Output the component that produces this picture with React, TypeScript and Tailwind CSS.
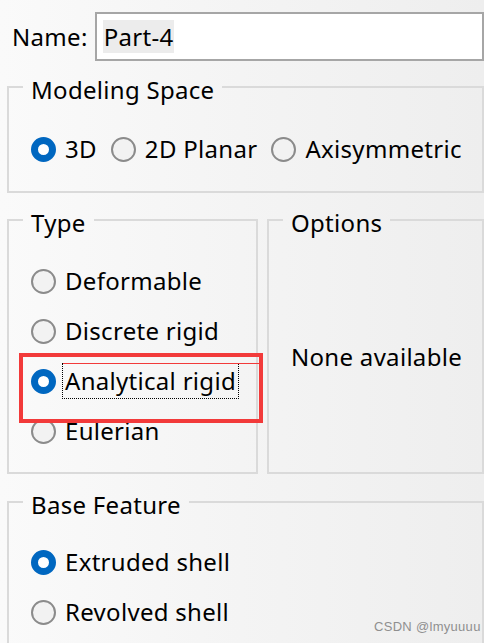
import React from "react"

const font = { fontFamily: "'Noto Sans', 'Open Sans', sans-serif" }

function Radio({ checked, label, focused }: { checked?: boolean; label: string; focused?: boolean }) {
  return (
    <label className="flex items-center h-[36px]">
      {checked ? (
        <span className="w-[25px] h-[25px] rounded-full border-[7px] border-[#0067c0] bg-white shrink-0" />
      ) : (
        <span className="w-[25px] h-[25px] rounded-full border-2 border-[#8b8b8b] bg-[#f2f2f2] shrink-0" />
      )}
      <span
        className={
          "ml-[6px] px-[3px] leading-[36px] whitespace-nowrap " +
          (focused ? "outline-1 outline-dotted outline-black -outline-offset-1" : "")
        }
      >
        {label}
      </span>
    </label>
  )
}

// legend is 36px tall (text pushed down 6px) so the border sits ~3px above the text middle
function Group({ title, className, children }: { title: string; className?: string; children: React.ReactNode }) {
  return (
    <fieldset className={"border-2 border-[#dadada] pl-[14px] pr-2 m-0 min-w-0 " + (className ?? "")}>
      <legend className="px-[8px] pt-[6px] leading-[30px]">{title}</legend>
      {children}
    </fieldset>
  )
}

export default function App() {
  return (
    <div
      className="relative w-[484px] h-[643px] overflow-hidden bg-gradient-to-r from-[#fafafa] to-[#eeeeee] text-black text-[24px] tracking-[0.3px]"
      style={font}
    >
      <div className="flex items-center pt-[12px] pl-[12px]">
        <span className="leading-[30px]">Name:</span>
        <div className="ml-[7px] flex-1 h-[49px] border-2 border-[#a6a6a6] bg-white flex items-center pl-[6px]">
          <span className="bg-[#ececec] px-[1px] leading-[33px]">Part-4</span>
        </div>
      </div>

      <div className="pl-[7px]">
        <Group title="Modeling Space" className="mt-[8px] h-[124px]">
          <div className="flex items-center gap-[11px] pl-[8px] pt-[26px]">
            <Radio checked label="3D" />
            <Radio label="2D Planar" />
            <Radio label="Axisymmetric" />
          </div>
        </Group>

        <div className="flex gap-[9px] mt-[9px]">
          <Group title="Type" className="w-[251px] h-[272px]">
            <div className="flex flex-col gap-[14px] pl-[8px] pt-[25px]">
              <Radio label="Deformable" />
              <Radio label="Discrete rigid" />
              <Radio checked focused label="Analytical rigid" />
              <Radio label="Eulerian" />
            </div>
          </Group>
          <Group title="Options" className="flex-1 h-[272px]">
            <div className="pt-[104px] pl-[8px] leading-[30px]">None available</div>
          </Group>
        </div>

        <Group title="Base Feature" className="mt-[10px] h-[200px]">
          <div className="flex flex-col gap-[14px] pl-[8px] pt-[24px]">
            <Radio checked label="Extruded shell" />
            <Radio label="Revolved shell" />
          </div>
        </Group>
      </div>

      {/* annotation box */}
      <div className="absolute left-[19px] top-[353px] w-[244px] h-[70px] border-4 border-[#f23a3a]" />
      <div className="absolute left-[63px] top-[363px] w-[196px] h-px bg-[#f23a3a]" />

      <div
        className="absolute left-[374px] top-[619px] text-[13px] text-[#8f8f8f] leading-[16px]"
        style={{ fontFamily: "'Liberation Sans', Arial, sans-serif" }}
      >
        CSDN @lmyuuuu
      </div>
    </div>
  )
}
